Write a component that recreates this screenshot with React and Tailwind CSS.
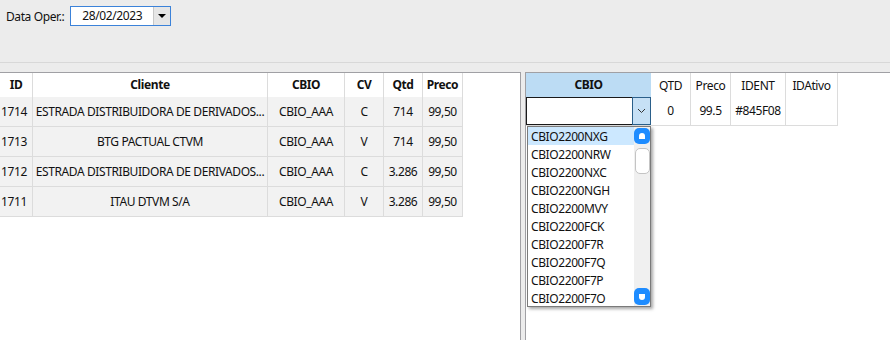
import React from "react";

const rows = [
  { id: "1714", cliente: "ESTRADA DISTRIBUIDORA DE DERIVADOS...", cbio: "CBIO_AAA", cv: "C", qtd: "714", preco: "99,50" },
  { id: "1713", cliente: "BTG PACTUAL CTVM", cbio: "CBIO_AAA", cv: "V", qtd: "714", preco: "99,50" },
  { id: "1712", cliente: "ESTRADA DISTRIBUIDORA DE DERIVADOS...", cbio: "CBIO_AAA", cv: "C", qtd: "3.286", preco: "99,50" },
  { id: "1711", cliente: "ITAU DTVM S/A", cbio: "CBIO_AAA", cv: "V", qtd: "3.286", preco: "99,50" },
];

const options = [
  "CBIO2200NXG",
  "CBIO2200NRW",
  "CBIO2200NXC",
  "CBIO2200NGH",
  "CBIO2200MVY",
  "CBIO2200FCK",
  "CBIO2200F7R",
  "CBIO2200F7Q",
  "CBIO2200F7P",
  "CBIO2200F7O",
];

const cols = "grid grid-cols-[33px_235px_77px_39px_39px_40px] w-[463px]";
const cell = "border-r border-b border-[#dcdcdc] flex items-center justify-center overflow-hidden whitespace-nowrap pt-[1px]";

export default function App() {
  return (
    <div className="w-[890px] h-[340px] bg-[#ececec] text-[12px] tracking-[-0.4px] text-[#111] font-['Segoe_UI','Noto_Sans',sans-serif] flex flex-col overflow-hidden">
      {/* filtro */}
      <div className="h-[63px] border-b border-[#d8d8d8] flex items-start pt-[6px] pl-[6px] gap-[6px]">
        <span className="leading-[21px]">Data Oper.:</span>
        <div className="w-[101px] h-[20px] bg-white border border-[#3b82d9] flex items-center">
          <span className="flex-1 pl-[11px] leading-[18px]">28/02/2023</span>
          <div className="w-[17px] h-[18px] bg-[#e6e6e6] border-l border-[#c8c8c8] flex items-center justify-center">
            <div className="w-0 h-0 border-l-[4px] border-r-[4px] border-t-[4px] border-l-transparent border-r-transparent border-t-black" />
          </div>
        </div>
      </div>

      <div className="h-[9px]" />

      <div className="flex-1 flex">
        {/* painel esquerdo */}
        <div className="w-[521px] bg-white border-t border-r border-[#a0a0a4]">
          <div className={cols}>
            {["ID", "Cliente", "CBIO", "CV", "Qtd", "Preco"].map((h) => (
              <div key={h} className="h-[24px] border-r border-[#dcdcdc] flex items-center justify-center font-bold">
                {h}
              </div>
            ))}
          </div>
          {rows.map((r) => (
            <div key={r.id} className={`${cols} bg-[#f2f2f2] h-[30px]`}>
              <div className={`${cell} justify-start pl-[1px]`}>{r.id}</div>
              <div className={`${cell} px-[3px]`}>{r.cliente}</div>
              <div className={cell}>{r.cbio}</div>
              <div className={cell}>{r.cv}</div>
              <div className={cell}>{r.qtd}</div>
              <div className={cell}>{r.preco}</div>
            </div>
          ))}
        </div>

        <div className="w-[4px]" />

        {/* painel direito */}
        <div className="flex-1 bg-white border-t border-l border-[#a0a0a4] relative">
          <div className="grid grid-cols-[125px_40px_40px_55px_52px] w-[312px]">
            <div className="h-[24px] bg-[#bcdcf4] flex items-center justify-center font-bold">CBIO</div>
            {["QTD", "Preco", "IDENT", "IDAtivo"].map((h) => (
              <div key={h} className="h-[24px] border-r border-[#dcdcdc] flex items-start pt-[4px] justify-center">
                {h}
              </div>
            ))}
            <div className="h-[29px] border-b border-[#dcdcdc] flex">
              <div className="flex-1 border border-r-0 border-[#1a1a1a] bg-white" />
              <div className="w-[19px] bg-[#c6e0f5] border border-[#2a5f8a] flex items-center justify-center">
                <svg width="9" height="6" viewBox="0 0 9 6">
                  <path d="M1 1 L4.5 4.5 L8 1" fill="none" stroke="#333" strokeWidth="1" />
                </svg>
              </div>
            </div>
            {["0", "99.5", "#845F08", ""].map((v, i) => (
              <div key={i} className="h-[29px] border-r border-b border-[#dcdcdc] flex items-center justify-center">
                {v}
              </div>
            ))}
          </div>

          {/* lista suspensa */}
          <div className="absolute left-[1px] top-[53px] w-[124px] h-[181px] bg-white border border-[#7a7a7a] shadow-[2px_2px_3px_rgba(0,0,0,0.35)] flex">
            <div className="flex-1 flex flex-col">
              {options.map((o, i) => (
                <div
                  key={o}
                  className={`h-[18px] leading-[19px] pl-[3px] ${i === 0 ? "bg-[#cce8ff]" : ""}`}
                >
                  {o}
                </div>
              ))}
            </div>
            <div className="w-[16px] bg-[#f0f0f0] flex flex-col items-center py-[1px]">
              <div className="w-[16px] h-[16px] bg-[#1e8cff] rounded-[5px] flex items-center justify-center">
                <div className="w-[6px] h-[6px] bg-white rounded-t-[3px]" />
              </div>
              <div className="w-[15px] h-[26px] mt-[4px] bg-white border border-[#c4c4c4] rounded-[5px]" />
              <div className="flex-1" />
              <div className="w-[16px] h-[17px] bg-[#1e8cff] rounded-[5px] flex items-center justify-center">
                <div className="w-[6px] h-[6px] bg-white rounded-b-[3px]" />
              </div>
            </div>
          </div>
        </div>
      </div>
    </div>
  );
}
